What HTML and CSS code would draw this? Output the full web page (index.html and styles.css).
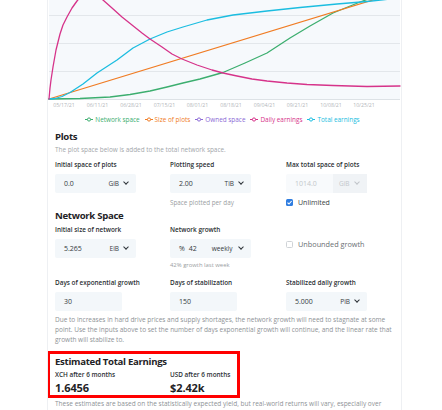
FILE: index.html
```html
<!DOCTYPE html>
<html>
<head>
<meta charset="utf-8">
<link rel="stylesheet" href="styles.css">
</head>
<body>
<div class="card">
  <svg class="chart" width="353" height="112" viewBox="48 0 353 112">
    <rect x="49" y="-40" width="351" height="139" fill="#f6f9fc"/>
    <g stroke="#e3e7eb" stroke-width="1">
      <line x1="49" y1="15.5" x2="400" y2="15.5"/>
      <line x1="49" y1="43.5" x2="400" y2="43.5"/>
      <line x1="49" y1="71.5" x2="400" y2="71.5"/>
      <line x1="49" y1="99.5" x2="400" y2="99.5" stroke="#dde2e6"/>
    </g>
    <g fill="none" stroke-width="1.3" stroke-linejoin="round" stroke-linecap="round">
      <polyline stroke="#3cae6f" points="49,99 80,98.5 110,97 130,94.5 150,91 167,87 183,83 200,79 223,72.5 245,63 267,53 290,38 310,26 333,13 360,2 380,-5"/>
      <polyline stroke="#f07c24" points="49,99 373,0 400,-8.3"/>
      <polyline stroke="#1bbde0" points="49,99 55,98.5 62,96.5 70,92.5 83,84 97,73 117,60 133,48 150,39 167,32 183,27 207,20 233,15 267,11 300,7.5 337,4 367,1.5 400,-2"/>
      <polyline stroke="#d6338a" points="49,99 50,88 51,80 53,67 56,50 60,34 63,25 67,17 72,8 77,1 82,-5 87,-8 92,-8 97,-5 103,0 112,8 122,17 132,25 142,33 150,39 162,47 172,54 182,59 197,65 212,70 223,73 237,76 252,79 267,81 287,83 307,84.5 333,85.5 367,86.5 400,86"/>
    </g>
    <g class="ticks" text-anchor="middle">
      <text x="64" y="107">05/17/21</text>
      <text x="97.5" y="107">06/11/21</text>
      <text x="131" y="107">06/28/21</text>
      <text x="164.5" y="107">07/15/21</text>
      <text x="197.5" y="107">08/01/21</text>
      <text x="231" y="107">08/18/21</text>
      <text x="264.5" y="107">09/04/21</text>
      <text x="297.5" y="107">09/21/21</text>
      <text x="331" y="107">10/08/21</text>
      <text x="364" y="107">10/25/21</text>
    </g>
  </svg>
  <div class="legend">
    <span class="item green"><svg width="8" height="5" viewBox="0 0 8 5"><line x1="0" y1="2.5" x2="8" y2="2.5"/><circle cx="4" cy="2.5" r="1.6"/></svg>Network space</span>
    <span class="item orange"><svg width="8" height="5" viewBox="0 0 8 5"><line x1="0" y1="2.5" x2="8" y2="2.5"/><circle cx="4" cy="2.5" r="1.6"/></svg>Size of plots</span>
    <span class="item purple"><svg width="8" height="5" viewBox="0 0 8 5"><line x1="0" y1="2.5" x2="8" y2="2.5"/><circle cx="4" cy="2.5" r="1.6"/></svg>Owned space</span>
    <span class="item pink"><svg width="8" height="5" viewBox="0 0 8 5"><line x1="0" y1="2.5" x2="8" y2="2.5"/><circle cx="4" cy="2.5" r="1.6"/></svg>Daily earnings</span>
    <span class="item cyan"><svg width="8" height="5" viewBox="0 0 8 5"><line x1="0" y1="2.5" x2="8" y2="2.5"/><circle cx="4" cy="2.5" r="1.6"/></svg>Total earnings</span>
  </div>

  <div class="body">
    <h5 class="h-plots">Plots</h5>
    <p class="sub">The plot space below is added to the total network space.</p>
    <div class="row r1">
      <div class="col">
        <label>Initial space of plots</label>
        <div class="field wide"><span class="val">0.0</span><span class="unit">GiB</span><span class="chev"></span></div>
      </div>
      <div class="col">
        <label>Plotting speed</label>
        <div class="field wide"><span class="val">2.00</span><span class="unit">TiB</span><span class="chev"></span></div>
        <div class="help">Space plotted per day</div>
      </div>
      <div class="col">
        <label>Max total space of plots</label>
        <div class="field wide disabled"><span class="val">1014.0</span><span class="unitbox"><span class="unit">GiB</span><span class="chev"></span></span></div>
        <div class="check on"><span class="box"><svg width="7" height="7" viewBox="0 0 7 7"><polyline points="1.5,3.6 3,5 5.6,2"/></svg></span>Unlimited</div>
      </div>
    </div>

    <h5 class="h-net">Network Space</h5>
    <div class="row r2">
      <div class="col">
        <label>Initial size of network</label>
        <div class="field wide"><span class="val">5.265</span><span class="unit">EiB</span><span class="chev"></span></div>
      </div>
      <div class="col">
        <label>Network growth</label>
        <div class="field wide"><span class="pct">%</span><span class="val">42</span><span class="unit">weekly</span><span class="chev"></span></div>
        <div class="help">42% growth last week</div>
      </div>
      <div class="col mid">
        <div class="check off"><span class="box"></span>Unbounded growth</div>
      </div>
    </div>

    <div class="row r3">
      <div class="col">
        <label>Days of exponential growth</label>
        <div class="field narrow"><span class="val">30</span></div>
      </div>
      <div class="col">
        <label>Days of stabilization</label>
        <div class="field narrow"><span class="val">150</span></div>
      </div>
      <div class="col">
        <label>Stabilized daily growth</label>
        <div class="field wide"><span class="val">5.000</span><span class="unit">PiB</span><span class="chev"></span></div>
      </div>
    </div>

    <p class="note">Due to increases in hard drive prices and supply shortages, the network growth will need to stagnate at some point. Use the inputs above to set the number of days exponential growth will continue, and the linear rate that growth will stabilize to.</p>

    <div class="earnings">
      <h5>Estimated Total Earnings</h5>
      <div class="erow">
        <div class="ecol"><div class="elabel">XCH after 6 months</div><div class="evalue">1.6456</div></div>
        <div class="ecol"><div class="elabel">USD after 6 months</div><div class="evalue">$2.42k</div></div>
      </div>
    </div>

    <p class="note last">These estimates are based on the statistically expected yield, but real-world returns will vary, especially over shorter time periods. Your 'luck' will play into how many blocks of 2 XCH you end up actually winning. Joining a pool will reduce the variance of your earnings.</p>
  </div>
</div>
</body>
</html>
```

FILE: styles.css
```css
html, body {
  margin: 0;
  padding: 0;
  background: #ffffff;
  overflow: hidden;
}
body {
  font-family: "Open Sans", "Noto Sans", sans-serif;
  color: #212529;
  height: 410px;
}
.card {
  margin-left: 47px;
  width: 353px;
  height: 410px;
  border-left: 1px solid #eef0f3;
  border-right: 1px solid #eef0f3;
  overflow: hidden;
}
.chart {
  display: block;
}
.ticks text {
  font-family: "Open Sans", sans-serif;
  font-size: 5.2px;
  fill: #b3b6ba;
}
.legend {
  display: flex;
  justify-content: center;
  align-items: center;
  gap: 5px;
  height: 14px;
  font-size: 6.4px;
  padding-right: 4px;
}
.legend .item {
  display: flex;
  align-items: center;
  gap: 2px;
}
.legend svg line { stroke-width: 1; }
.legend svg circle { fill: #fff; stroke-width: 1; }
.green { color: #3cae6f; }
.green svg { stroke: #3cae6f; }
.orange { color: #f07c24; }
.orange svg { stroke: #f07c24; }
.purple { color: #8c6ad6; }
.purple svg { stroke: #8c6ad6; }
.pink { color: #d6338a; }
.pink svg { stroke: #d6338a; }
.cyan { color: #1bbde0; }
.cyan svg { stroke: #1bbde0; }

.body {
  padding-left: 7px;
}
h5 {
  margin: 0;
  font-size: 9.6px;
  line-height: 12px;
  font-weight: 700;
  letter-spacing: -0.3px;
  color: #1f2326;
}
.h-plots { margin-top: 5px; }
.h-net { margin-top: 3px; }
.sub {
  margin: 2px 0 0;
  font-size: 6.4px;
  line-height: 9px;
  color: #a2a6aa;
}
.row {
  display: grid;
  grid-template-columns: 115px 116px 115px;
}
.r1 { margin-top: 6px; }
.r2 { margin-top: 3px; }
.r3 { margin-top: 8px; }
.col {
  display: flex;
  flex-direction: column;
  align-items: flex-start;
}
.col.mid {
  justify-content: center;
  padding-bottom: 12px;
}
label {
  font-size: 6.4px;
  line-height: 9px;
  font-weight: 600;
  color: #2b2f33;
}
.field {
  margin-top: 4.5px;
  height: 19px;
  display: flex;
  align-items: center;
  background: #f3f7fa;
  border-radius: 2px;
  font-size: 7px;
  color: #343a40;
  box-sizing: border-box;
}
.field.wide { width: 81px; padding: 0 8px 0 9px; }
.field.narrow { width: 67px; padding: 0 9px; }
.field .val { flex: 1; }
.field .unit { font-size: 6.5px; margin-right: 5px; }
.field .pct { margin-right: 4px; }
.field .pct + .val { flex: 0 0 auto; width: 23px; }
.field .pct ~ .unit { flex: 1; }
.chev {
  width: 3px;
  height: 3px;
  border-right: 1.2px solid #2d3238;
  border-bottom: 1.2px solid #2d3238;
  transform: rotate(45deg);
  margin-top: -2px;
}
.field.disabled {
  padding: 0;
  background: #f8fafc;
  color: #c3c7cb;
}
.field.disabled .val { padding-left: 9px; }
.unitbox {
  width: 34px;
  height: 19px;
  display: flex;
  align-items: center;
  background: #f0f3f6;
  padding-left: 6px;
  box-sizing: border-box;
}
.field.disabled .chev { border-color: #c0c4c8; }
.help {
  margin-top: 5.5px;
  font-size: 6.3px;
  line-height: 9px;
  color: #9a9ea2;
}
.r2 .help { margin-top: 3.5px; font-size: 5.9px; }
.check {
  display: flex;
  align-items: center;
  gap: 5px;
  margin-top: 5.5px;
  font-size: 7px;
  line-height: 9px;
  color: #3a3f44;
}
.check .box {
  width: 7px;
  height: 7px;
  border-radius: 1.5px;
  box-sizing: border-box;
  display: flex;
}
.check.on .box { background: #2f7de0; }
.check.on svg polyline { fill: none; stroke: #fff; stroke-width: 1.1; }
.check.off { color: #6a6f74; font-size: 7.3px; }
.check.off .box { border: 1px solid #cfd3d7; background: #fff; }
.note {
  margin: 4px 0 0;
  font-size: 6.5px;
  line-height: 10px;
  color: #8e9296;
  width: 338px;
}
.earnings {
  margin: 6px 0 0 -8px;
  width: 193px;
  height: 47px;
  box-sizing: border-box;
  border: 3px solid #ff0000;
  padding: 2px 5px 0;
}
.erow {
  display: grid;
  grid-template-columns: 115px 1fr;
  margin-top: 2.5px;
}
.elabel {
  font-size: 6.4px;
  line-height: 9px;
  font-weight: 600;
  color: #2b2f33;
}
.evalue {
  margin-top: 2px;
  font-size: 11px;
  line-height: 13px;
  font-weight: 700;
  letter-spacing: -0.1px;
  color: #1f2326;
}
.note.last { margin-top: 1px; }
```
